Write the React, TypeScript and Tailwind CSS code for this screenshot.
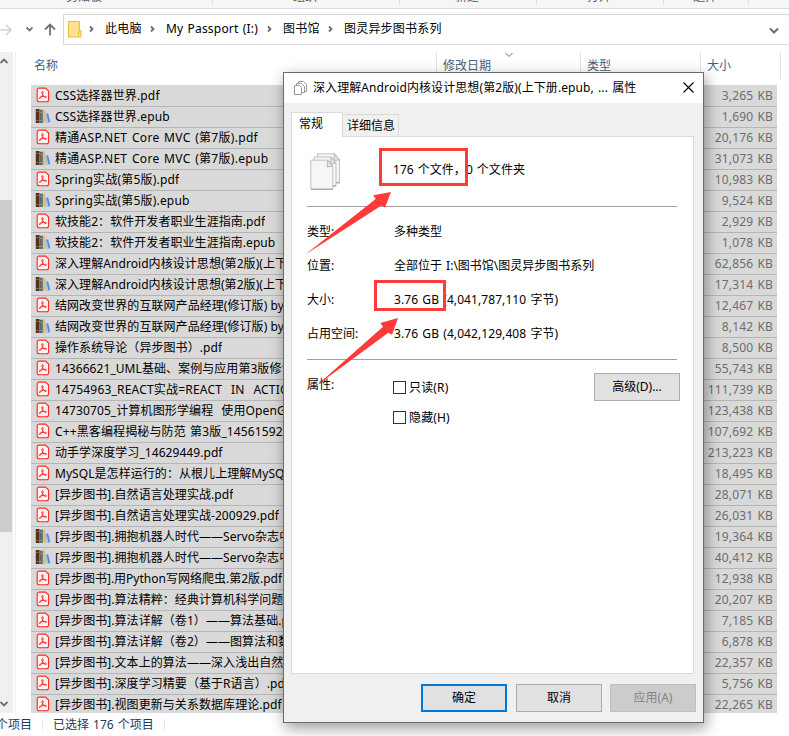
import React from "react";

interface FileRow {
    name: string;
    size: string;
    spacing?: string;
}

const files: FileRow[] = [
    { name: "CSS选择器世界.pdf", size: "3,265 KB", spacing: "tracking-[0.15px]" },
    { name: "CSS选择器世界.epub", size: "1,690 KB", spacing: "tracking-[0.15px]" },
    { name: "精通ASP.NET Core MVC (第7版).pdf", size: "20,176 KB", spacing: "tracking-[0.3px] [word-spacing:1.2px]" },
    { name: "精通ASP.NET Core MVC (第7版).epub", size: "31,073 KB", spacing: "tracking-[0.3px] [word-spacing:1.2px]" },
    { name: "Spring实战(第5版).pdf", size: "10,983 KB", spacing: "tracking-[0.2px]" },
    { name: "Spring实战(第5版).epub", size: "9,524 KB", spacing: "tracking-[0.2px]" },
    { name: "软技能2：软件开发者职业生涯指南.pdf", size: "2,929 KB" },
    { name: "软技能2：软件开发者职业生涯指南.epub", size: "1,078 KB" },
    { name: "深入理解Android内核设计思想(第2版)(上下册.pdf", size: "62,856 KB" },
    { name: "深入理解Android内核设计思想(第2版)(上下册.epub", size: "17,314 KB" },
    { name: "结网改变世界的互联网产品经理(修订版) by.pdf", size: "12,467 KB" },
    { name: "结网改变世界的互联网产品经理(修订版) by.epub", size: "8,142 KB" },
    { name: "操作系统导论（异步图书）.pdf", size: "8,500 KB" },
    { name: "14366621_UML基础、案例与应用第3版修订版.pdf", size: "55,743 KB" },
    { name: "14754963_REACT实战=REACT  IN  ACTION.pdf", size: "111,739 KB", spacing: "tracking-[0.2px] [word-spacing:1.1px]" },
    { name: "14730705_计算机图形学编程  使用OpenGL.pdf", size: "123,438 KB", spacing: "tracking-[0.12px] [word-spacing:0.8px]" },
    { name: "C++黑客编程揭秘与防范 第3版_14561592.pdf", size: "107,692 KB", spacing: "tracking-[0.13px] [word-spacing:1px]" },
    { name: "动手学深度学习_14629449.pdf", size: "213,223 KB" },
    { name: "MySQL是怎样运行的：从根儿上理解MySQL.pdf", size: "18,495 KB" },
    { name: "[异步图书].自然语言处理实战.pdf", size: "28,071 KB" },
    { name: "[异步图书].自然语言处理实战-200929.pdf", size: "26,031 KB" },
    { name: "[异步图书].拥抱机器人时代——Servo杂志中.epub", size: "19,364 KB" },
    { name: "[异步图书].拥抱机器人时代——Servo杂志中.epub", size: "40,412 KB" },
    { name: "[异步图书].用Python写网络爬虫.第2版.pdf", size: "12,938 KB", spacing: "tracking-normal" },
    { name: "[异步图书].算法精粹：经典计算机科学问题的.pdf", size: "20,207 KB" },
    { name: "[异步图书].算法详解（卷1）——算法基础.pdf", size: "7,185 KB" },
    { name: "[异步图书].算法详解（卷2）——图算法和数.pdf", size: "6,878 KB" },
    { name: "[异步图书].文本上的算法——深入浅出自然.pdf", size: "22,357 KB" },
    { name: "[异步图书].深度学习精要（基于R语言）.pdf", size: "5,756 KB" },
    { name: "[异步图书].视图更新与关系数据库理论.pdf", size: "22,265 KB" },
];

const groups = [
    { label: "剪贴板", width: "w-[213px]", pad: "pl-[66px]" },
    { label: "组织", width: "w-[187px]", pad: "pl-[80px]" },
    { label: "新建", width: "w-[137px]", pad: "pl-[55px]" },
    { label: "打开", width: "w-[127px]", pad: "pl-[50px]" },
    { label: "选择", width: "w-[85px]", pad: "pl-[29px]" },
];

const PdfIcon = () => (
    <svg className="-mt-[2px] shrink-0" width="16" height="16" viewBox="0 0 16 16" fill="none">
        <path
            d="M4.200 1.100h6.300l3.100 3v8.600a2 2 0 0 1-2 2H4.200a2 2 0 0 1-2-2V3.100a2 2 0 0 1 2-2Z"
            fill="#fff4f3"
            stroke="#fa2a20"
            strokeWidth="1.100"
        />
        <path
            d="M7.500 4.600c.9 0 .8 1.300.3 2.500-.6 1.600-1.700 3.700-2.600 4.400-.7.5-1.300-.3-.6-.9 1-.8 3-1.300 4.800-1.300 1.300 0 2.200.4 2 .9-.3.6-1.500.2-2.300-.6C8 8.500 7.200 7.200 6.900 6c-.2-.8 0-1.400.6-1.400Z"
            stroke="#fa2a20"
            strokeWidth="1"
        />
    </svg>
);

const BooksIcon = () => (
    <svg className="-mt-[2px] shrink-0" width="16" height="16" viewBox="0 0 16 16">
        <path d="M.8 1h3.700v14H.8z" fill="#54301c" />
        <path d="M1.300 3h2.400v1H1.300zM1.300 12h2.400v1H1.300z" fill="#a06a38" />
        <path d="M4.500 1.700h3.400V15H4.500z" fill="#5f6d69" />
        <path d="M5.300 4h1.600v1H5.300zM5.300 12h1.600v1H5.300z" fill="#98a29d" />
        <path d="m7.900 2 2-.8 1.500 13.200-1.500.6h-2z" fill="#dcc07c" />
        <path d="m10.500 6 2.600-.8 2.100 8.800-2.900 1z" fill="#4d86ee" />
        <path d="m10.500 6 1-.3 2.100 9-1.300.3z" fill="#a9c9fb" />
    </svg>
);

const Sheet = ({ x, y }: { x: number; y: number }) => (
    <>
        <path d={`M${x} ${y}h17l5 6v23h-22z`} fill="#f6f6f6" stroke="#b4b4b4" strokeWidth=".8" />
        <path d={`M${x + 17} ${y}l-.8 6.800 5.800-.8z`} fill="#e3e3e3" stroke="#a5a5a5" strokeWidth=".7" />
        <path d={`M${x} ${y + 29}h22`} stroke="#8f8f8f" strokeWidth=".8" />
    </>
);

const FilesIcon = () => (
    <svg width="32" height="38" viewBox="0 0 32 38">
        <Sheet x={7.500} y={0.800} />
        <Sheet x={4} y={4} />
        <Sheet x={0.800} y={7.200} />
    </svg>
);

const Chevron = ({ d, w = 1.800 }: { d: string; w?: number }) => (
    <svg width="10" height="10" viewBox="0 0 10 10" fill="none" stroke="#6d6d6d" strokeWidth={w}>
        <path d={d} />
    </svg>
);

const Crumb = ({ label, width }: { label: string; width: string }) => (
    <div className="flex items-center">
        <Chevron d="M3 2.500 5.500 5 3 7.500" />
        <span className={`ml-[8px] whitespace-pre tracking-[0.2px] [word-spacing:0.8px] ${width}`}>{label}</span>
    </div>
);

const Explorer = () => (
    <div className="flex h-[736px] w-[789px] flex-col overflow-hidden bg-white">
        {/* Ribbon */}
        <div className="flex h-[9px] shrink-0 overflow-hidden border-b border-[#dadbdc] bg-[#f5f6f7] text-[#5a5a5a]">
            {groups.map((g) => (
                <div key={g.label} className={`h-[5px] shrink-0 border-r border-[#dcdddf] ${g.width} ${g.pad}`}>
                    <div className="-mt-[11px] leading-4">{g.label}</div>
                </div>
            ))}
        </div>

        {/* Address bar */}
        <div className="mt-[5px] flex h-[31px] shrink-0 items-center">
            <svg width="63" height="31" viewBox="0 0 63 31" fill="none">
                <path d="M0 16h11M6 11l5 5-5 5" stroke="#d2d2d2" strokeWidth="1.600" />
                <path d="m26.500 13.500 3 3 3-3" stroke="#777" strokeWidth="1.800" />
                <path d="M50 21.500v-11M45 15.500l5-5 5 5" stroke="#707070" strokeWidth="1.800" />
            </svg>
            <div className="flex h-full flex-1 items-center border-y border-l border-[#d9d9d9] pl-1">
                <svg width="14" height="17" viewBox="0 0 14 17">
                    <path d="M.5.5h11v9h1.500v6.500H.5z" fill="#ffe390" stroke="#e9bd3e" />
                    <path d="M10.500 16v-6h2" fill="none" stroke="#e9bd3e" />
                </svg>
                <div className="-mt-px ml-[5px] flex">
                    <Crumb label="此电脑" width="w-[43px]" />
                    <Crumb label="My Passport (I:)" width="w-[99px]" />
                    <Crumb label="图书馆" width="w-[43px]" />
                    <Crumb label="图灵异步图书系列" width="w-[110px]" />
                </div>
                <div className="mr-[10px] ml-auto">
                    <Chevron d="m1 3.500 4 4 4-4" w={2} />
                </div>
            </div>
        </div>

        <div className="mt-[7px] flex h-[661px] shrink-0">
            {/* Scrollbar */}
            <div className="flex w-[13px] flex-col bg-[#f0f0f0]">
                <div className="mt-[4px] -ml-px"><Chevron d="m1.500 7 3.500-3.500L8.500 7" /></div>
                <div className="mt-[134px] h-[332px] w-3 bg-[#cdcdcd]" />
                <div className="mt-auto mb-[4px] -ml-px"><Chevron d="m1.500 3 3.500 3.500L8.500 3" /></div>
            </div>
            <div className="ml-[2px] w-px bg-[#f0f0f0]" />

            <div className="ml-[15px] w-[750px] overflow-hidden">
                {/* Column headings */}
                <div className="flex h-[27px] text-[#4c607a]">
                    <div className="w-[406px] border-r border-[#e3e3e3] pt-[5px] pl-[3px]">名称</div>
                    <div className="relative w-[144px] border-r border-[#e3e3e3] pt-[5px] pl-[6px]">
                        修改日期
                        <div className="absolute -top-[2px] left-[67px]">
                            <Chevron d="m1.500 3 3.500 3.500L8.500 3" w={1} />
                        </div>
                    </div>
                    <div className="w-[120px] border-r border-[#e3e3e3] pt-[5px] pl-[6px]">类型</div>
                    <div className="w-[80px] border-r border-[#e3e3e3] pt-[5px] pl-[6px]">大小</div>
                </div>

                <div className="mt-[6px] w-[746px] bg-[#d9d9d9] pt-px">
                    {files.map((f, i) => (
                        <div key={i} className="flex h-[21px] items-center border-b border-[#b5b5b5] pr-[4px] pl-[4px]">
                            {f.name.endsWith(".pdf") ? <PdfIcon /> : <BooksIcon />}
                            <span className={`ml-[4px] max-w-[236px] overflow-hidden whitespace-pre ${f.spacing ?? "tracking-[0.06px]"}`}>{f.name}</span>
                            <span className="ml-auto tracking-[0.15px] text-[#6d6d6d] [word-spacing:1px]">{f.size}</span>
                        </div>
                    ))}
                </div>
            </div>
        </div>

        {/* Status bar */}
        <div className="flex h-[23px] items-center text-[#1e395b]">
            <span className="-ml-[4px] w-[46px]">个项目</span>
            <span className="h-[11px] w-px bg-[#e8e8e8]" />
            <span className="ml-[10px] w-[111px] [word-spacing:1px]">已选择 176 个项目</span>
            <span className="h-[11px] w-px bg-[#e8e8e8]" />
        </div>
    </div>
);

const Field = ({ label, value, spacing = "" }: { label: string; value: string; spacing?: string }) => (
    <div className="flex h-[34px] items-center">
        <span className="w-[87px]">{label}</span>
        <span className={spacing}>{value}</span>
    </div>
);

const Check = ({ label }: { label: string }) => (
    <label className="flex h-[30px] items-center tracking-[0.15px]">
        <span className="-mt-[2px] mr-[3px] h-[13px] w-[13px] border border-[#333] bg-white" />
        {label}
    </label>
);

const PropertiesDialog = () => (
    <div className="absolute top-[72px] left-[283px] flex h-[651px] w-[421px] flex-col border border-[#6b6b6b] bg-[#f0f0f0] shadow-[2px_5px_14px_rgba(0,0,0,0.4)]">
        {/* Title */}
        <div className="flex h-[30px] shrink-0 items-center bg-white pl-[10px]">
            <svg width="13" height="14" viewBox="0 0 13 14" fill="#fff" stroke="#999">
                <path d="M4.500.5h5l3 3v7h-8z" />
                <path d="M2.500 2.500h5l3 3v6h-8z" />
                <path d="M.5 4.500h5l2 2v7h-7z" />
            </svg>
            <span className="ml-[6px] whitespace-pre tracking-[0.09px] [word-spacing:1px]">深入理解Android内核设计思想(第2版)(上下册.epub, ... 属性</span>
            <svg className="-mt-[2px] mr-[9px] ml-auto" width="11" height="11" viewBox="0 0 11 11" stroke="#000" strokeWidth="1.100">
                <path d="m.5.5 10 10M10.500.5l-10 10" />
            </svg>
        </div>

        {/* Tabs */}
        <div className="mt-[9px] ml-[7px] flex h-6 shrink-0 items-end">
            <div className="z-10 -mb-px h-[25px] w-[52px] border-x border-t border-[#d9d9d9] bg-white pl-[7px] leading-[22px]">常规</div>
            <div className="h-[22px] w-[56px] border-t border-r border-[#d9d9d9] pl-[4px] leading-[22px]">详细信息</div>
        </div>

        <div className="ml-[7px] h-[538px] w-[403px] shrink-0 border border-[#dcdcdc] bg-white pr-[16px] pl-[15px]">
            <div className="flex h-[70px] items-center border-b border-[#a0a0a0]">
                <div className="ml-[3px] w-[83px]"><FilesIcon /></div>
                <span className="-mt-[4px] tracking-[0.05px] [word-spacing:0.8px]">176 个文件，0 个文件夹</span>
            </div>
            <div className="h-[153px] border-b border-[#a0a0a0] pt-[8px]">
                <Field label="类型:" value="多种类型" />
                <Field label="位置:" value="全部位于 I:\图书馆\图灵异步图书系列" spacing="[word-spacing:1px]" />
                <Field label="大小:" value="3.76 GB (4,041,787,110 字节)" spacing="tracking-[0.08px] [word-spacing:1px]" />
                <Field label="占用空间:" value="3.76 GB (4,042,129,408 字节)" spacing="tracking-[0.08px] [word-spacing:1px]" />
            </div>
            <div className="flex pt-[13px]">
                <span className="mt-[3px] w-[86px]">属性:</span>
                <div>
                    <Check label="只读(R)" />
                    <Check label="隐藏(H)" />
                </div>
                <button className="-mr-[3px] ml-auto h-7 w-[86px] border border-[#adadad] bg-[#e1e1e1]">高级(D)...</button>
            </div>
        </div>

        {/* Actions */}
        <div className="mt-[10px] flex justify-end gap-[8px] pr-[7px]">
            <button className="mr-px h-7 w-[86px] border-2 border-[#0078d7] bg-[#e1e1e1]">确定</button>
            <button className="h-7 w-[86px] border border-[#adadad] bg-[#e1e1e1]">取消</button>
            <button className="h-7 w-[86px] border border-[#bfbfbf] bg-[#cccccc] text-[#838383]">应用(A)</button>
        </div>
    </div>
);

// Red boxes and arrows drawn over the window
const Marks = () => (
    <svg className="pointer-events-none absolute top-0 left-0 z-20" width="789" height="736" viewBox="0 0 789 736">
        <g fill="none" stroke="#fd3b39" strokeWidth="3">
            <rect x="380.500" y="149.500" width="86" height="35" />
            <rect x="375.500" y="281.500" width="69" height="28" />
        </g>
        <g fill="#fd3b39">
            <path d="M305.300 254.600 375.700 199l-2.400-3.700 17.700-3.300-6 15.500-3.500-2z" />
            <path d="M316 386 383 326.700l-2.700-3.700 17.700-5-6 16.700-3.700-2z" />
        </g>
    </svg>
);

export default function App() {
    return (
        <div className="relative h-[736px] w-[789px] overflow-hidden font-['Noto_Sans','Noto_Sans_CJK_SC',sans-serif] text-[12px] leading-[18px] text-black">
            <Explorer />
            <PropertiesDialog />
            <Marks />
        </div>
    );
}
